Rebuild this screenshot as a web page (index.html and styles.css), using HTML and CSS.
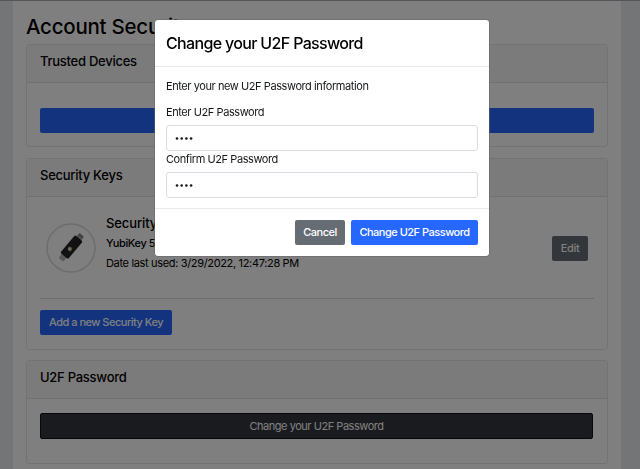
FILE: index.html
```html
<!DOCTYPE html>
<html lang="en">
<head>
<meta charset="utf-8">
<title>Account Security</title>
<link rel="stylesheet" href="styles.css">
</head>
<body>
<main class="page">
  <h1 class="page-title">Account Security</h1>
  <section class="card devices">
    <h2 class="card-header">Trusted Devices</h2>
    <div class="card-body"><button class="btn primary block" aria-label="Trust device"></button></div>
  </section>
  <section class="card keys">
    <h2 class="card-header">Security Keys</h2>
    <div class="card-body">
      <div class="key-row">
        <svg class="key-icon" viewBox="0 0 50 50">
          <circle cx="25" cy="25" r="24" fill="none" stroke="#dadada" stroke-width="1.5"/>
          <g transform="translate(25.2 24.500) rotate(-50)">
            <rect x="-16" y="-3" width="7" height="6" rx="1" fill="#b5b5b5"/>
            <rect x="10" y="-3" width="6.500" height="6" rx="1" fill="#858585"/>
            <path d="M13 -3v6" stroke="#b5b5b5" stroke-width="1"/>
            <rect x="-11" y="-5" width="23" height="10" rx="1.500" fill="#242424"/>
            <circle cx="-2" cy="0" r="2.300" fill="#a88c55"/>
            <circle cx="-2" cy="-.3" r="1.300" fill="#f2eee4"/>
          </g>
        </svg>
        <div class="key-info">
          <h3 class="key-name">Security Key</h3>
          <p class="key-model">YubiKey 5 NFC</p>
          <p class="key-date">Date last used: 3/29/2022, 12:47:28 PM</p>
        </div>
        <button class="btn secondary edit">Edit</button>
      </div>
      <button class="btn primary add">Add a new Security Key</button>
    </div>
  </section>
  <section class="card password">
    <h2 class="card-header">U2F Password</h2>
    <div class="card-body"><button class="btn dark block">Change your U2F Password</button></div>
  </section>
</main>
<div class="backdrop">
  <div class="modal" role="dialog">
    <h2 class="modal-title">Change your U2F Password</h2>
    <form class="modal-body">
      <p class="intro">Enter your new U2F Password information</p>
      <label class="label" for="pw">Enter U2F Password</label>
      <div class="field" id="pw"><svg class="dots" viewBox="0 0 20 4"><circle cx="2" cy="2.500" r="1.300"/><circle cx="6.700" cy="2.500" r="1.300"/><circle cx="11.400" cy="2.500" r="1.300"/><circle cx="16.100" cy="2.500" r="1.300"/></svg></div>
      <label class="label" for="pw2">Confirm U2F Password</label>
      <div class="field" id="pw2"><svg class="dots" viewBox="0 0 20 4"><circle cx="2" cy="2.500" r="1.300"/><circle cx="6.700" cy="2.500" r="1.300"/><circle cx="11.400" cy="2.500" r="1.300"/><circle cx="16.100" cy="2.500" r="1.300"/></svg></div>
    </form>
    <div class="modal-footer">
      <button class="btn secondary cancel">Cancel</button>
      <button class="btn primary submit">Change U2F Password</button>
    </div>
  </div>
</div>
</body>
</html>
```
FILE: styles.css
```css
* { box-sizing: border-box; margin: 0; }
html, body { height: 469px; overflow: hidden; }
body { background: #e8ebef; font: 11px/17px Inter, "Liberation Sans", sans-serif; letter-spacing: -.42px; color: #14171a; border-top: 1px solid #aaaab2; }
.page { width: 608px; height: 468px; margin-left: 13px; padding: 12px 13px 0; background: #fff; }
.page-title { height: 31px; font-size: 20.500px; line-height: 27px; font-weight: 500; letter-spacing: -.25px; color: #000; }
.card { width: 582px; border: 1px solid #e6e6e6; border-radius: 3px; }
.card-header { height: 38px; padding: 8px 13px 0; background: #f7f7f7; border-bottom: 1px solid #e3e3e3; font-size: 13px; line-height: 17px; font-weight: 500; letter-spacing: -.26px; color: #000; }
.card-body { padding: 0 13px; }
.devices { height: 103px; }
.devices .card-body { padding-top: 25px; }
.keys { height: 192px; margin-top: 11px; }
.keys .card-header { line-height: 16px; }
.password { height: 104px; margin-top: 10px; }
.password .card-header { line-height: 16px; }
.password .card-body { padding-top: 14px; }
.btn { display: block; height: 25px; padding: 0; border: 0; border-radius: 2px; font: 500 11px/25px Inter, sans-serif; letter-spacing: -.5px; color: #fff; text-align: center; }
.block { width: 554px; }
.primary { background: #2667ff; }
.secondary { background: #666c74; }
.dark { width: 553px; height: 26px; background: #34363c; border: 1px solid #101114; font-weight: 400; line-height: 23px; letter-spacing: -.46px; }
.key-row { display: flex; height: 102px; border-bottom: 1px solid #dadada; }
.key-icon { width: 50px; height: 50px; margin: 26px 0 0 5.500px; }
.key-info { flex: 1; margin: 17px 0 0 10.500px; }
.key-name { font-size: 13px; line-height: 18px; font-weight: 500; letter-spacing: -.1px; color: #000; }
.key-model { margin-top: 3px; line-height: 17px; font-weight: 500; letter-spacing: -.4px; color: #000; }
.key-date { margin-top: 3px; letter-spacing: -.34px; color: #000; }
.edit { width: 36px; margin: 39px 6px 0 0; letter-spacing: -.3px; }
.add { width: 132px; margin-top: 11px; }
.backdrop { position: fixed; inset: 0; background: rgba(0,0,0,.5); }
.modal { width: 334px; height: 236px; margin: 20px 0 0 155px; background: #fff; border-radius: 3px; box-shadow: 0 0 0 .5px #666; }
.modal-title { height: 47px; padding: 13px 11px 0; font-size: 16px; line-height: 21px; font-weight: 500; letter-spacing: -.66px; color: #000; border-bottom: 1px solid #e4e6e9; }
.modal-body { height: 141px; padding: 11px 11px 0; }
.intro { height: 26px; }
.label { display: block; height: 21px; line-height: 17px; }
.label + .field { display: flex; align-items: center; width: 312px; height: 26px; padding-left: 8px; border: 1px solid #d9dee4; border-radius: 3px; }
.dots { width: 20px; height: 4px; fill: #14171a; }
.modal-footer { display: flex; justify-content: flex-end; gap: 6px; height: 48px; padding: 11px 11px 0; border-top: 1px solid #e9ebed; }
.cancel { width: 50px; }
.submit { width: 127px; }
```
